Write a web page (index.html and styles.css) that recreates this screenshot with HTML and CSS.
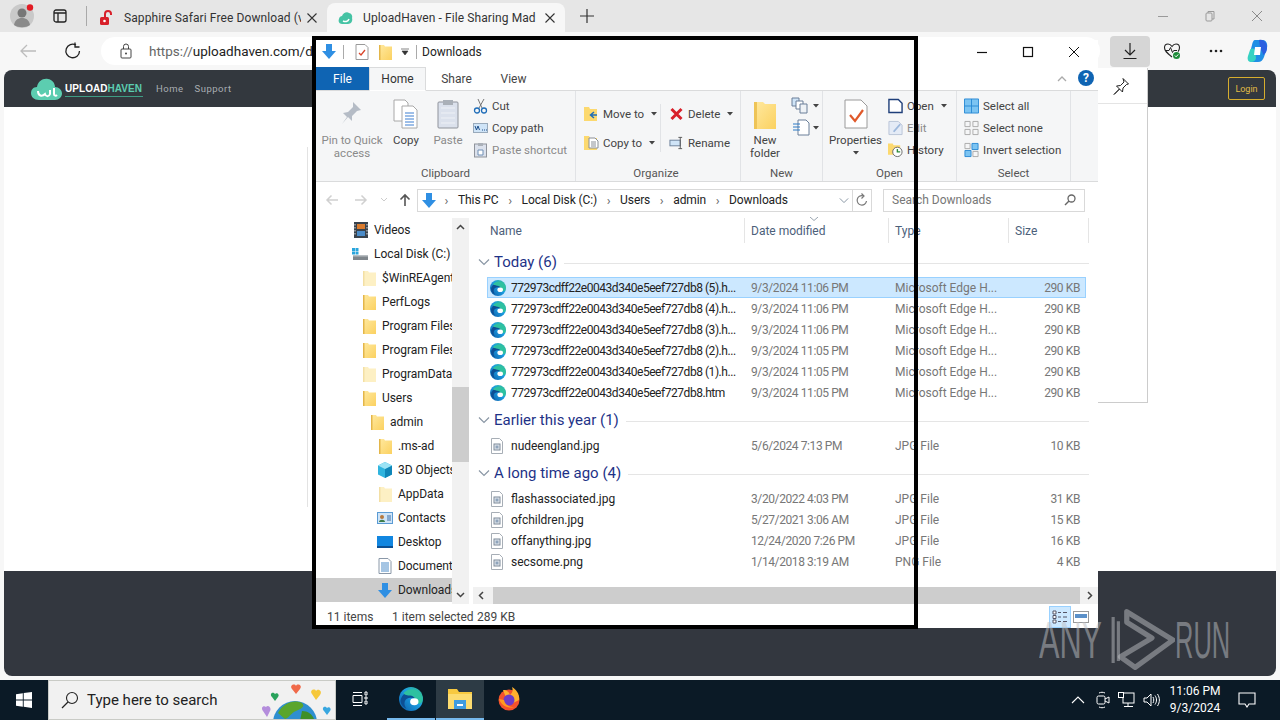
FILE: index.html
```html
<!DOCTYPE html>
<html lang="en">
<head>
<meta charset="utf-8">
<title>UploadHaven - File Sharing Made Simple</title>
<link rel="stylesheet" href="styles.css">
</head>
<body>
<svg class="sprite" width="0" height="0" aria-hidden="true">
  <defs>
    <linearGradient id="edgeG" x1="0" y1="1" x2="1" y2="0"><stop offset="0" stop-color="#0c59a4"/><stop offset=".55" stop-color="#1b9de2"/><stop offset="1" stop-color="#35c48d"/></linearGradient>
    <linearGradient id="fold" x1="0" y1="0" x2="1" y2="1"><stop offset="0" stop-color="#ffe9a0"/><stop offset="1" stop-color="#fbd160"/></linearGradient>
    <symbol id="edge" viewBox="0 0 16 16"><circle cx="8" cy="8" r="8" fill="url(#edgeG)"/><path d="M1 9C2 4 7 2 10.500 3.500 14 5 15 8 13.500 10 12 8 8 6 5 8 3.500 9 3 12 5 14.500 2.500 13.500 1 11 1 9Z" fill="#0d4f94"/><path d="M3 4C6 .5 12 .5 15 5c1 2 1 4 0 5.500-1.500 1-4 .8-4.500-.5 1-2-.5-4-3-4.300-2-.2-3.500 0-4.500-1.700Z" fill="#2ec1a0"/><ellipse cx="10.200" cy="9.800" rx="2.800" ry="2.300" fill="#fff"/></symbol>
    <symbol id="folder" viewBox="0 0 13 16"><path d="M0 1h5l1 1.500h7V16H0Z" fill="url(#fold)"/><path d="M0 1h1.500v15H0Z" fill="#e3b64a"/></symbol>
    <symbol id="pale" viewBox="0 0 13 16"><path d="M0 1h5l1 1.500h7V16H0Z" fill="#fdf0c4"/><path d="M0 1h1.500v15H0Z" fill="#f3dfa4"/></symbol>
    <symbol id="img" viewBox="0 0 14 16"><path d="M1.500.5h8l3 3v12h-11Z" fill="#fff" stroke="#a7aeb6"/><rect x="4" y="6" width="6" height="6" fill="#e3e8ee" stroke="#7d8a99"/><rect x="5.500" y="7.500" width="3" height="3" fill="#8fa4bb"/></symbol>
    <symbol id="chev" viewBox="0 0 12 8"><path d="M1 1.500l5 5 5-5" fill="none" stroke="#8a97a5" stroke-width="1.200"/></symbol>
    <symbol id="caret" viewBox="0 0 6 4"><path d="M0 0h6L3 3.500Z" fill="#444"/></symbol>
    <symbol id="xmark" viewBox="0 0 10 10"><path d="M.5.500l9 9M9.500.500l-9 9" stroke="#333" stroke-width="1.100"/></symbol>
  </defs>
</svg>

<div class="desktop">
  <div class="browser">
    <div class="tabstrip">
      <div class="profile"><svg width="26" height="26" viewBox="0 0 26 26"><circle cx="13" cy="13" r="12" fill="#c9c9c9"/><circle cx="13" cy="10" r="4.500" fill="#777"/><path d="M5 22c1-6 5-7 8-7s7 1 8 7c-4 3-12 3-16 0Z" fill="#8a8a8a"/><circle cx="21" cy="4.500" r="3.200" fill="#e21b24"/></svg></div>
      <div class="vtabs"><svg width="14" height="14" viewBox="0 0 14 14"><rect x="1" y="1" width="12" height="12" rx="2" fill="none" stroke="#222" stroke-width="1.300"/><path d="M1 4h12M5 4v9" stroke="#222" stroke-width="1.300"/></svg></div>
      <div class="tabdiv"></div>
      <div class="tab">
        <svg class="tabico" width="14" height="16" viewBox="0 0 14 16"><path d="M6 7V4a3 3 0 0 1 6 0v1" fill="none" stroke="#d8202a" stroke-width="2"/><rect x="1" y="7" width="9" height="8" rx="1.500" fill="#d8202a"/><circle cx="5.500" cy="11" r="1.300" fill="#fff"/></svg>
        <span class="tabtitle">Sapphire Safari Free Download (v</span>
        <svg class="tabx" width="10" height="10"><use href="#xmark"/></svg>
      </div>
      <div class="tab active">
        <svg class="tabico" width="16" height="16" viewBox="0 0 16 16"><path d="M4 14C1 14 0 11 1 9c0-2 2-3 3-3 1-3 5-5 7-3 2 0 4 3 3 5 1 3-1 6-4 6Z" fill="#45c3a4"/><path d="M5 11c2 1 5 1 6-2" fill="none" stroke="#fff" stroke-width="1.500"/></svg>
        <span class="tabtitle">UploadHaven - File Sharing Mad</span>
        <svg class="tabx" width="10" height="10"><use href="#xmark"/></svg>
      </div>
      <div class="newtab"><svg width="16" height="16" viewBox="0 0 16 16"><path d="M8 1v14M1 8h14" stroke="#333" stroke-width="1.200"/></svg></div>
      <div class="wincontrols">
        <svg width="12" height="12" viewBox="0 0 12 12"><path d="M1 6.500h10" stroke="#9a9a9a"/></svg>
        <svg width="12" height="12" viewBox="0 0 12 12"><rect x="2" y="3" width="6" height="8" rx="1" fill="none" stroke="#9a9a9a"/><path d="M4 3V1.500h6V9H8" fill="none" stroke="#9a9a9a"/></svg>
        <svg width="12" height="12" viewBox="0 0 12 12"><path d="M1 1l10 10M11 1L1 11" stroke="#8a8a8a"/></svg>
      </div>
    </div>
    <div class="toolbar">
      <svg class="back" width="18" height="14" viewBox="0 0 18 14"><path d="M17 7H2M8 1L2 7l6 6" fill="none" stroke="#bcbcbc" stroke-width="1.300"/></svg>
      <svg class="reload" width="18" height="18" viewBox="0 0 18 18"><path d="M15.500 9A6.800 6.800 0 1 1 12 3" fill="none" stroke="#222" stroke-width="1.300"/><path d="M11 .5V5h4.500" fill="none" stroke="#222" stroke-width="1.300"/></svg>
      <div class="urlpill">
        <svg width="12" height="16" viewBox="0 0 12 16"><rect x="1" y="6" width="10" height="9" rx="1" fill="none" stroke="#444"/><path d="M3.500 6V3.500a2.500 2.500 0 0 1 5 0V6" fill="none" stroke="#444"/><circle cx="6" cy="10.500" r="1" fill="#444"/></svg>
        <span class="url"><span class="urlmuted">https://</span>uploadhaven.com/d</span>
      </div>
      <div class="tools">
        <div class="dlbtn"><svg width="16" height="18" viewBox="0 0 16 18"><path d="M8 1v12M3 8l5 5 5-5M1.500 16.500h13" fill="none" stroke="#222" stroke-width="1.200"/></svg></div>
        <div class="tool"><svg width="18" height="18" viewBox="0 0 18 18"><path d="M9 15C4 11 1.500 9 1.500 5.800 1.500 3.500 3.200 2 5 2c1.800 0 3 1 4 2.500C10 3 11.200 2 13 2c1.800 0 3.500 1.500 3.500 3.800 0 1.500-.6 2.700-1.500 3.900" fill="none" stroke="#222" stroke-width="1.100"/><path d="M2.500 8.500H6l1.500-3 2 5 1.200-2H14" fill="none" stroke="#222"/><circle cx="13.500" cy="13.500" r="3.500" fill="#1e8c3a"/><path d="M11.800 13.500l1.300 1.300 2.200-2.400" fill="none" stroke="#fff"/></svg></div>
        <div class="tool"><svg width="14" height="4" viewBox="0 0 14 4"><circle cx="2" cy="2" r="1.300" fill="#222"/><circle cx="7" cy="2" r="1.300" fill="#222"/><circle cx="12" cy="2" r="1.300" fill="#222"/></svg></div>
        <div class="tool copilot"><svg width="24" height="24" viewBox="0 0 24 24"><path d="M9 1h8c3 0 5 4 4 8l-3 9c-1 3-3 5-6 5H6C3 23 2 20 3 17l3-11c.5-3 1.500-5 3-5Z" fill="#1f8fe5"/><path d="M4 11c1-2 4-2 5 0l1 8c0 2-2 4-5 4-3 0-4-3-3-6Z" fill="#36d2c2"/><path d="M13 1c3-1 6 1 7 3 2 5 1 10-3 12 0-4-3-5-3-8Z" fill="#2b5fe0"/><path d="M9 8h6l-1 8H8Z" fill="#fff"/></svg></div>
      </div>
    </div>
    <main class="page">
      <header class="sitehead">
        <svg class="sitelogo" width="31" height="24" viewBox="0 0 31 24"><path d="M8 23C3 23 0 20 0 16c0-3 2-6 6-6 1-6 6-9 11-8 4 .5 7 4 7 8 4 0 7 3 7 6.500S28 23 24 23Z" fill="#5ccdb0"/><path d="M7 14c0 5 4 6 7 3 1 3 4 3 5 0v-4M23 11v6c0 2 2 2 3 1" fill="none" stroke="#fff" stroke-width="2"/></svg>
        <span class="brand">UPLOAD<b>HAVEN</b></span>
        <nav class="sitenav"><span>Home</span><span>Support</span></nav>
        <span class="login">Login</span>
      </header>
      <div class="pagebody"></div>
      <footer class="sitefoot"></footer>
    </main>
  </div>

  <div class="flyout">
    <div class="flyhead"><svg width="18" height="18" viewBox="0 0 18 18"><path d="M11 1.500l5.500 5.500-2 .5-3.500 3.500-.5 4-3-3-5.500 5.500 5.500-5.500-3-3 4-.5L12 5Z" fill="none" stroke="#222" stroke-linejoin="round"/></svg></div>
  </div>

  <section class="explorer">
    <div class="titlebar">
      <svg width="16" height="17" viewBox="0 0 16 17"><path d="M5 1h6v7h4l-7 8-7-8h4Z" fill="#2f8fe3"/></svg>
      <i class="qsep"></i>
      <svg width="14" height="16" viewBox="0 0 14 16"><path d="M1 .5h9l3 3v12H1Z" fill="#fff" stroke="#9a9a9a"/><path d="M4 9l2 2 4-5" fill="none" stroke="#d9452a" stroke-width="1.300"/></svg>
      <svg class="qfold" width="13" height="16"><use href="#folder"/></svg>
      <svg class="qcaret" width="8" height="8" viewBox="0 0 8 8"><path d="M0 1h8M1 3h6L4 7Z" fill="#333" stroke="#333" stroke-width=".6"/></svg>
      <i class="qsep q2"></i>
      <span class="wintitle">Downloads</span>
      <div class="excontrols">
        <svg width="12" height="12" viewBox="0 0 12 12"><path d="M1 6.500h10" stroke="#111" stroke-width="1.200"/></svg>
        <svg width="12" height="12" viewBox="0 0 12 12"><rect x="1.500" y="1.500" width="9" height="9" fill="none" stroke="#111" stroke-width="1.200"/></svg>
        <svg width="12" height="12" viewBox="0 0 12 12"><path d="M1 1l10 10M11 1L1 11" stroke="#111"/></svg>
      </div>
    </div>
    <div class="tabsrow">
      <span class="rtab file">File</span><span class="rtab home">Home</span><span class="rtab share">Share</span><span class="rtab">View</span>
      <svg class="collapse" width="10" height="6" viewBox="0 0 10 6"><path d="M1 5l4-4 4 4" fill="none" stroke="#aaa" stroke-width="1.300"/></svg>
      <span class="help">?</span>
    </div>

    <div class="ribbon">
      <div class="rgroup g-clip">
        <div class="rbody">
          <div class="big w-pin off"><svg width="24" height="30" viewBox="0 0 24 30"><path d="M13 3l8 8-4 1-5 5v5l-4-4-6 7 5-7-4-4 5-1 5-5Z" fill="#b5bcc6"/></svg><span>Pin to Quick<br>access</span></div>
          <div class="big w-copy"><svg width="26" height="30" viewBox="0 0 26 30"><path d="M1 1h11l3 3v18H1Z" fill="#fff" stroke="#a8a8a8"/><path d="M9 7h11l4 4v18H9Z" fill="#fff" stroke="#a8a8a8"/><path d="M12 14h9M12 17h9M12 20h9M12 23h9M12 26h9" stroke="#3d7fd1"/></svg><span>Copy</span></div>
          <div class="big w-paste off"><svg width="22" height="30" viewBox="0 0 22 30"><rect x="1" y="3" width="20" height="26" rx="1" fill="#dbe1ec" stroke="#8f939b"/><rect x="6" y="1" width="10" height="5" fill="#aab0b8"/><path d="M4 9h14M4 14h14M4 19h14M4 24h14" stroke="#eef1f6"/></svg><span>Paste</span></div>
          <div class="smalls w-small">
            <div class="sm"><svg width="15" height="16" viewBox="0 0 15 16"><path d="M5 1l4 9M11 1L6 10" stroke="#777"/><circle cx="4" cy="12.500" r="2.500" fill="none" stroke="#1f6db8" stroke-width="1.300"/><circle cx="11" cy="12.500" r="2.500" fill="none" stroke="#1f6db8" stroke-width="1.300"/></svg><span>Cut</span></div>
            <div class="sm"><svg width="15" height="12" viewBox="0 0 15 12"><rect x=".5" y="1.500" width="14" height="9" fill="#cfe4f7" stroke="#9ab"/><path d="M2 4l1.500 4L5 4l1.500 4M9 8h1M11 8h1M13 8h1" stroke="#1c4f8c" fill="none"/></svg><span>Copy path</span></div>
            <div class="sm off"><svg width="15" height="16" viewBox="0 0 15 16"><rect x="1.500" y="2" width="12" height="13" fill="#dbe1ec" stroke="#8f939b"/><rect x="5" y="1" width="5" height="3" fill="#aab0b8"/><path d="M5 8h5v5H5Z" fill="#fff" stroke="#6f8fb5"/></svg><span>Paste shortcut</span></div>
          </div>
        </div>
        <div class="rlabel">Clipboard</div>
      </div>

      <div class="rgroup g-org">
        <div class="rbody">
          <div class="smalls tall c1">
            <div class="sm"><svg width="15" height="16" viewBox="0 0 15 16"><path d="M0 1h5l1 2h7v12H0Z" fill="#fcd96f"/><path d="M13 9H7m3-3L6.500 9 10 12" fill="none" stroke="#1f6db8" stroke-width="1.500"/></svg><span>Move to</span><svg class="car" width="6" height="4"><use href="#caret"/></svg></div>
            <div class="sm"><svg width="15" height="16" viewBox="0 0 15 16"><path d="M0 1h5l1 2h7v12H0Z" fill="#fcd96f"/><path d="M5 3h6l3 3v7H5Z" fill="#fff" stroke="#8a8f96"/><path d="M7 7h5M7 9h5M7 11h5" stroke="#8a8f96"/></svg><span>Copy to</span><svg class="car" width="6" height="4"><use href="#caret"/></svg></div>
          </div>
          <i class="minisep"></i>
          <div class="smalls tall c2">
            <div class="sm"><svg width="14" height="14" viewBox="0 0 14 14"><path d="M2 2l10 10M12 2L2 12" stroke="#d8202a" stroke-width="3"/></svg><span>Delete</span><svg class="car" width="6" height="4"><use href="#caret"/></svg></div>
            <div class="sm"><svg width="16" height="14" viewBox="0 0 16 14"><rect x="1" y="4" width="11" height="6" fill="#cfe4f7" stroke="#6a7f99"/><path d="M12 1v12M10 1h4M10 13h4" stroke="#555" fill="none"/></svg><span>Rename</span></div>
          </div>
        </div>
        <div class="rlabel org">Organize</div>
      </div>

      <div class="rgroup g-new">
        <div class="rbody">
          <div class="big w-nf"><svg width="22" height="30" viewBox="0 0 22 30"><path d="M0 3h9l2 2h11v25H0Z" fill="url(#fold)"/><path d="M0 3h3v27H0Z" fill="#eec457"/></svg><span>New<br>folder</span></div>
          <div class="newstack">
            <div class="nsrow"><svg width="20" height="17" viewBox="0 0 20 17"><path d="M1 1h7v8H1Z" fill="#cfe4f7" stroke="#6a7f99"/><path d="M5 4h7v8H5Z" fill="#fff" stroke="#6a7f99"/><path d="M9 7h7v9H9Z" fill="#eef2f6" stroke="#6a7f99"/></svg><svg width="6" height="4"><use href="#caret"/></svg></div>
            <div class="nsrow"><svg width="20" height="17" viewBox="0 0 20 17"><path d="M7 1h8l3 3v12H7Z" fill="#fff" stroke="#6a7f99"/><path d="M2 5h7M2 8h7M2 11h7" stroke="#2a78c4"/></svg><svg width="6" height="4"><use href="#caret"/></svg></div>
          </div>
        </div>
        <div class="rlabel">New</div>
      </div>

      <div class="rgroup g-open">
        <div class="rbody">
          <div class="big w-prop"><svg width="24" height="30" viewBox="0 0 24 30"><path d="M1 1h16l6 6v22H1Z" fill="#fff" stroke="#9a9a9a"/><path d="M6 16l5 6 8-11" fill="none" stroke="#e0592a" stroke-width="2.200"/></svg><span>Properties</span><svg class="bigcar" width="6" height="4"><use href="#caret"/></svg></div>
          <div class="smalls w-openlist">
            <div class="sm"><svg width="16" height="16" viewBox="0 0 16 16"><path d="M1 1h10l4 4v10H1Z" fill="#fff" stroke="#1f3f7a" stroke-width="1.500"/></svg><span>Open</span><svg class="car" width="6" height="4"><use href="#caret"/></svg></div>
            <div class="sm off"><svg width="16" height="16" viewBox="0 0 16 16"><path d="M1 1h10l4 4v10H1Z" fill="#e4ebf6" stroke="#b7c3d6"/><path d="M6 12l7-8" stroke="#9db8dc" stroke-width="2"/></svg><span>Edit</span></div>
            <div class="sm"><svg width="16" height="16" viewBox="0 0 16 16"><path d="M0 1h5l1 2h7v10H0Z" fill="#fcd96f"/><circle cx="10" cy="10" r="5" fill="#fff" stroke="#666"/><path d="M10 7v3h3" fill="none" stroke="#2e8b3c" stroke-width="1.500"/></svg><span>History</span></div>
          </div>
        </div>
        <div class="rlabel">Open</div>
      </div>

      <div class="rgroup g-sel">
        <div class="rbody">
          <div class="smalls w-sel">
            <div class="sm"><svg width="16" height="16" viewBox="0 0 16 16"><path d="M.5.5h15v15H.5ZM8 .5v15M.5 8h15" fill="#7cc4f2" stroke="#2a8ad4"/></svg><span>Select all</span></div>
            <div class="sm"><svg width="16" height="16" viewBox="0 0 16 16"><path d="M1 1h5.500v5.500H1ZM9.500 1H15v5.500H9.500ZM1 9.500h5.500V15H1ZM9.500 9.500H15V15H9.500Z" fill="none" stroke="#aaa"/></svg><span>Select none</span></div>
            <div class="sm"><svg width="16" height="16" viewBox="0 0 16 16"><path d="M8.500 1H15v6.500H8.500ZM1 8.500h6.500V15H1Z" fill="#7cc4f2" stroke="#2a8ad4"/><path d="M1 1h5.500v5.500H1ZM9.500 9.500H15V15H9.500Z" fill="none" stroke="#aaa"/></svg><span>Invert selection</span></div>
          </div>
        </div>
        <div class="rlabel">Select</div>
      </div>
    </div>

    <div class="addressrow">
      <svg class="navarr" width="14" height="12" viewBox="0 0 14 12"><path d="M13 6H2M6.500 1.500L2 6l4.500 4.500" fill="none" stroke="#d0d0d0" stroke-width="1.500"/></svg>
      <svg class="navarr" width="14" height="12" viewBox="0 0 14 12"><path d="M1 6h11M7.500 1.500L12 6l-4.500 4.500" fill="none" stroke="#d0d0d0" stroke-width="1.500"/></svg>
      <svg class="navcar" width="6" height="4" viewBox="0 0 6 4"><path d="M0 0l3 3 3-3" fill="none" stroke="#ccc"/></svg>
      <svg class="navup" width="12" height="14" viewBox="0 0 12 14"><path d="M6 13V2M1.500 6.500L6 2l4.500 4.500" fill="none" stroke="#555" stroke-width="1.600"/></svg>
      <div class="addrbox">
        <svg class="addrico" width="16" height="17" viewBox="0 0 16 17"><path d="M5 1h6v7h4l-7 8-7-8h4Z" fill="#2f8fe3"/></svg>
        <span class="crumbsep">›</span><span>This PC</span><span class="crumbsep">›</span><span>Local Disk (C:)</span><span class="crumbsep">›</span><span>Users</span><span class="crumbsep">›</span><span>admin</span><span class="crumbsep">›</span><span>Downloads</span>
        <svg class="addrchev" width="10" height="7"><use href="#chev"/></svg>
      </div>
      <div class="refresh"><svg width="12" height="14" viewBox="0 0 12 14"><path d="M10.500 8A4.700 4.700 0 1 1 7 2.800" fill="none" stroke="#777" stroke-width="1.200"/><path d="M5.500 .5L8 3 5.500 5.500" fill="none" stroke="#777" stroke-width="1.200"/></svg></div>
      <div class="searchbox"><span>Search Downloads</span><svg width="12" height="12" viewBox="0 0 12 12"><circle cx="7.500" cy="4.500" r="3.500" fill="none" stroke="#666" stroke-width="1.300"/><path d="M5 7l-4 4" stroke="#666" stroke-width="1.500"/></svg></div>
    </div>

    <div class="content">
      <aside class="navpane">
        <div class="tree">
          <div class="node l1"><svg width="14" height="16" viewBox="0 0 14 16"><rect width="14" height="16" fill="#39424c"/><rect x="3" y="2" width="8" height="5" fill="#d97b2e"/><rect x="3" y="9" width="8" height="5" fill="#4a8bc8"/><path d="M1 2v12M13 2v12" stroke="#ddd" stroke-dasharray="1.500 1.500"/></svg><span>Videos</span></div>
          <div class="node l1 drive"><svg width="16" height="14" viewBox="0 0 16 14"><rect x="0" y="1" width="3" height="3" fill="#2aa5dc"/><rect x="3.500" y="1" width="3" height="3" fill="#2aa5dc"/><rect x="0" y="4.500" width="3" height="3" fill="#2aa5dc"/><rect x="3.500" y="4.500" width="3" height="3" fill="#2aa5dc"/><rect x="1" y="8" width="15" height="5" fill="#7f868c"/><rect x="1" y="8" width="15" height="1.500" fill="#b9bec2"/></svg><span>Local Disk (C:)</span></div>
          <div class="node l2"><svg width="13" height="16"><use href="#pale"/></svg><span>$WinREAgent</span></div>
          <div class="node l2"><svg width="13" height="16"><use href="#folder"/></svg><span>PerfLogs</span></div>
          <div class="node l2"><svg width="13" height="16"><use href="#folder"/></svg><span>Program Files</span></div>
          <div class="node l2"><svg width="13" height="16"><use href="#folder"/></svg><span>Program Files (x86)</span></div>
          <div class="node l2"><svg width="13" height="16"><use href="#pale"/></svg><span>ProgramData</span></div>
          <div class="node l2"><svg width="13" height="16"><use href="#folder"/></svg><span>Users</span></div>
          <div class="node l3"><svg width="13" height="16"><use href="#folder"/></svg><span>admin</span></div>
          <div class="node l4"><svg width="13" height="16"><use href="#folder"/></svg><span>.ms-ad</span></div>
          <div class="node l4 wide"><svg width="16" height="16" viewBox="0 0 16 16"><path d="M8 0l7 3.500v9L8 16l-7-3.500v-9Z" fill="#2fb4de"/><path d="M8 7l7-3.500v9L8 16Z" fill="#0f86b8"/><path d="M8 7L1 3.500 8 0l7 3.500Z" fill="#9be3f5"/></svg><span>3D Objects</span></div>
          <div class="node l4"><svg width="13" height="16"><use href="#pale"/></svg><span>AppData</span></div>
          <div class="node l4 wide"><svg width="16" height="12" viewBox="0 0 16 12"><rect x=".5" y=".5" width="15" height="11" fill="#cfe4f7" stroke="#5a9bd4"/><circle cx="5" cy="5" r="2" fill="#b5793f"/><path d="M2 10c0-3 6-3 6 0Z" fill="#3c7d4a"/><path d="M10 4h4M10 6h4M10 8h4" stroke="#3c6fa8"/></svg><span>Contacts</span></div>
          <div class="node l4 wide"><svg width="16" height="12" viewBox="0 0 16 12"><rect width="16" height="12" fill="#1186e0"/><path d="M0 11h16" stroke="#0b4f92" stroke-width="2"/></svg><span>Desktop</span></div>
          <div class="node l4 wide"><svg width="14" height="16" viewBox="0 0 14 16"><path d="M1 .5h9l3 3v12H1Z" fill="#fff" stroke="#8a98a8"/><path d="M3 5h8M3 7h8M3 9h8M3 11h8M3 13h8" stroke="#4a8bc8"/></svg><span>Documents</span></div>
          <div class="node l4 wide sel"><svg width="16" height="17" viewBox="0 0 16 17"><path d="M5 1h6v7h4l-7 8-7-8h4Z" fill="#2f8fe3"/></svg><span>Downloads</span></div>
        </div>
        <div class="vscroll">
          <svg width="9" height="6" viewBox="0 0 9 6"><path d="M1 5l3.500-3.500L8 5" fill="none" stroke="#444" stroke-width="1.500"/></svg>
          <div class="vtrack"><div class="vthumb"></div></div>
          <svg width="9" height="6" viewBox="0 0 9 6"><path d="M1 1l3.500 3.500L8 1" fill="none" stroke="#444" stroke-width="1.500"/></svg>
        </div>
      </aside>

      <div class="files">
        <div class="colheads">
          <span class="ch c-name">Name</span><span class="ch c-date">Date modified<svg class="sortmark" width="8" height="4" viewBox="0 0 8 4"><path d="M0 0l4 3.500L8 0" fill="none" stroke="#9aa5b0"/></svg></span><span class="ch c-type">Type</span><span class="ch c-size">Size</span>
        </div>

        <div class="ghead"><svg width="12" height="8"><use href="#chev"/></svg><span>Today (6)</span><i></i></div>
        <div class="row sel"><svg width="16" height="16"><use href="#edge"/></svg><span class="n h">772973cdff22e0043d340e5eef727db8 (5).h...</span><span class="d">9/3/2024 11:06 PM</span><span class="t">Microsoft Edge H...</span><span class="s">290 KB</span></div>
        <div class="row"><svg width="16" height="16"><use href="#edge"/></svg><span class="n h">772973cdff22e0043d340e5eef727db8 (4).h...</span><span class="d">9/3/2024 11:06 PM</span><span class="t">Microsoft Edge H...</span><span class="s">290 KB</span></div>
        <div class="row"><svg width="16" height="16"><use href="#edge"/></svg><span class="n h">772973cdff22e0043d340e5eef727db8 (3).h...</span><span class="d">9/3/2024 11:06 PM</span><span class="t">Microsoft Edge H...</span><span class="s">290 KB</span></div>
        <div class="row"><svg width="16" height="16"><use href="#edge"/></svg><span class="n h">772973cdff22e0043d340e5eef727db8 (2).h...</span><span class="d">9/3/2024 11:05 PM</span><span class="t">Microsoft Edge H...</span><span class="s">290 KB</span></div>
        <div class="row"><svg width="16" height="16"><use href="#edge"/></svg><span class="n h">772973cdff22e0043d340e5eef727db8 (1).h...</span><span class="d">9/3/2024 11:05 PM</span><span class="t">Microsoft Edge H...</span><span class="s">290 KB</span></div>
        <div class="row"><svg width="16" height="16"><use href="#edge"/></svg><span class="n h">772973cdff22e0043d340e5eef727db8.htm</span><span class="d">9/3/2024 11:05 PM</span><span class="t">Microsoft Edge H...</span><span class="s">290 KB</span></div>

        <div class="ghead"><svg width="12" height="8"><use href="#chev"/></svg><span>Earlier this year (1)</span><i></i></div>
        <div class="row"><svg width="14" height="16"><use href="#img"/></svg><span class="n">nudeengland.jpg</span><span class="d">5/6/2024 7:13 PM</span><span class="t">JPG File</span><span class="s">10 KB</span></div>

        <div class="ghead"><svg width="12" height="8"><use href="#chev"/></svg><span>A long time ago (4)</span><i></i></div>
        <div class="row"><svg width="14" height="16"><use href="#img"/></svg><span class="n">flashassociated.jpg</span><span class="d">3/20/2022 4:03 PM</span><span class="t">JPG File</span><span class="s">31 KB</span></div>
        <div class="row"><svg width="14" height="16"><use href="#img"/></svg><span class="n">ofchildren.jpg</span><span class="d">5/27/2021 3:06 AM</span><span class="t">JPG File</span><span class="s">15 KB</span></div>
        <div class="row"><svg width="14" height="16"><use href="#img"/></svg><span class="n">offanything.jpg</span><span class="d">12/24/2020 7:26 PM</span><span class="t">JPG File</span><span class="s">16 KB</span></div>
        <div class="row"><svg width="14" height="16"><use href="#img"/></svg><span class="n">secsome.png</span><span class="d">1/14/2018 3:19 AM</span><span class="t">PNG File</span><span class="s">4 KB</span></div>

        <div class="hscroll">
          <svg width="6" height="9" viewBox="0 0 6 9"><path d="M5 1L1.500 4.500 5 8" fill="none" stroke="#444" stroke-width="1.500"/></svg>
          <div class="hthumb"></div>
          <svg width="6" height="9" viewBox="0 0 6 9"><path d="M1 1l3.500 3.500L1 8" fill="none" stroke="#444" stroke-width="1.500"/></svg>
        </div>
      </div>
    </div>

    <div class="statusbar">
      <span class="st1">11 items</span><span class="st2">1 item selected</span><span class="st3">289 KB</span>
      <div class="viewbtns">
        <span class="vb on"><svg width="16" height="14" viewBox="0 0 16 14"><path d="M1 1h3v3H1ZM1 5.500h3v3H1ZM1 10h3v3H1Z" fill="#fff" stroke="#556"/><path d="M6 2.500h3M11 2.500h4M6 7h3M11 7h4M6 11.500h3M11 11.500h4" stroke="#556"/></svg></span>
        <span class="vb two"><svg width="16" height="12" viewBox="0 0 16 12"><rect x=".5" y=".5" width="15" height="11" fill="#fff" stroke="#999"/><path d="M2 3h12v4H2Z" fill="#5b90c8"/></svg></span>
      </div>
    </div>
  </section>

  <div class="frame"></div>

  <div class="watermark">
    <span class="wm-any">ANY</span>
    <svg width="65" height="64" viewBox="3 0 62 60"><path d="M11 12V50M6 8v44" fill="none" stroke="currentColor" stroke-width="3"/><path d="M19 3l44 27-36 26-14-10 30-18-24-15Z" fill="none" stroke="currentColor" stroke-width="5" stroke-linejoin="round"/></svg>
    <span class="wm-run">RUN</span>
  </div>

  <footer class="taskbar">
    <div class="start"><svg width="16" height="16" viewBox="0 0 16 16"><path d="M0 2.200L6.800 1.200v6.300H0ZM7.700 1.100L16 0v7.500H7.700ZM0 8.500h6.800v6.300L0 13.800ZM7.700 8.500H16V16l-8.300-1.200Z" fill="#fff"/></svg></div>
    <div class="search">
      <svg width="18" height="18" viewBox="0 0 18 18"><circle cx="11" cy="7" r="5.500" fill="none" stroke="#222" stroke-width="1.100"/><path d="M7 11l-6 6" stroke="#222" stroke-width="1.200"/></svg>
      <span>Type here to search</span>
      <svg class="earth" width="72" height="40" viewBox="0 0 72 40"><circle cx="33" cy="42" r="22" fill="#2e8fd0"/><path d="M16 32c5-10 16-14 24-10 4 4-2 6-6 8-5 2-6 6-11 8Z" fill="#5aa52c"/><path d="M40 30c6 0 10 3 12 8l-14 2Z" fill="#3f8f27"/><path d="M30 8c-3-4 3-6 4-3 1-3 7-1 4 3l-4 5Z" fill="#f06a4a"/><path d="M10 16c-3-3 1-6 3-3 2-2 5 1 3 3l-3 4Z" fill="#29a35c"/><path d="M50 13c-3-4 3-6 4-3 2-3 7 0 4 4l-4 5Z" fill="#f6c83a"/><path d="M62 30c-3-3 1-6 3-3 2-2 5 1 3 3l-3 4Z" fill="#38a7e0"/><path d="M1 30c-3-4 1-6 3-4 2-3 6 1 4 4l-3 6Z" fill="#b48ddc"/></svg>
    </div>
    <div class="tbtn taskview"><svg width="16" height="16" viewBox="0 0 16 16"><path d="M1 1.500h9M1 14.500h9M1 4.500h9v7H1ZM13 1h2v3h-2ZM13 6h2v2h-2ZM13 10h2v3h-2Z" fill="none" stroke="#fff"/></svg></div>
    <div class="tbtn running"><svg width="24" height="24"><use href="#edge"/></svg></div>
    <div class="tbtn running current"><svg width="24" height="22" viewBox="0 0 24 22"><path d="M0 1h9l2 3h13v17H0Z" fill="#f7c940"/><path d="M0 6h24v15H0Z" fill="#fcdc70"/><path d="M6 12h12v9H6Z" fill="#3f9ce0"/><path d="M9 16h6v2H9Z" fill="#fff"/></svg></div>
    <div class="tbtn fox"><svg width="24" height="24" viewBox="0 0 24 24"><circle cx="12" cy="13" r="10.500" fill="#f4512c"/><path d="M6 3c4 0 6 2 7 5 3-3 3-5 2-8 5 3 8 8 7 13L12 18Z" fill="#ffb02e"/><circle cx="12" cy="13" r="5.500" fill="#6e3cc7"/><path d="M2 12c2 6 8 10 15 8-5 0-9-2-10-7Z" fill="#ff9a1f"/></svg></div>
    <div class="tray">
      <svg class="trchev" width="14" height="8" viewBox="0 0 14 8"><path d="M1 7l6-6 6 6" fill="none" stroke="#fff" stroke-width="1.100"/></svg>
      <svg width="14" height="18" viewBox="0 0 14 18"><rect x="1" y="5" width="8" height="8" rx="1.500" fill="none" stroke="#fff"/><path d="M9 8l4-2v6l-4-2M3 2c2-1 4-1 6 0M3 16c2 1 4 1 6 0" fill="none" stroke="#fff"/></svg>
      <svg width="17" height="16" viewBox="0 0 17 16"><rect x="5" y="1" width="11" height="10" fill="none" stroke="#fff"/><rect x=".5" y=".5" width="5" height="5" fill="#0b1a26" stroke="#fff"/><path d="M10 11v3M6 14.500h9" stroke="#fff"/></svg>
      <svg width="17" height="14" viewBox="0 0 17 14"><path d="M1 5h3l4-4v12l-4-4H1Z" fill="none" stroke="#fff"/><path d="M10 4c1 2 1 4 0 6M12 2.500c2 3 2 6 0 9M14.500 1c2.500 4 2.500 8 0 12" fill="none" stroke="#fff"/></svg>
      <div class="clock"><span>11:06 PM</span><span>9/3/2024</span></div>
      <svg class="notif" width="18" height="16" viewBox="0 0 18 16"><path d="M1 1h16v11h-6l-2 3-2-3H1Z" fill="none" stroke="#fff" stroke-width="1.100"/></svg>
    </div>
  </footer>
</div>
</body>
</html>
```
FILE: styles.css
```css
* { box-sizing: border-box; }
html, body { margin: 0; padding: 0; width: 1280px; height: 720px; overflow: hidden; }
body { font-family: Roboto, "Open Sans", sans-serif; font-size: 12px; color: #222; }
svg { display: block; flex: none; }
.sprite { position: absolute; }
.desktop { position: relative; width: 1280px; height: 720px; display: flex; flex-direction: column; background: #0b1a26; }

/* browser */
.browser { flex: 1; display: flex; flex-direction: column; background: #f7f7f7; min-height: 0; }
.tabstrip { height: 32px; background: #e6e6e6; display: flex; align-items: center; padding-left: 9px; }
.profile { width: 26px; margin-right: 18px; }
.vtabs { width: 14px; margin-right: 19px; }
.tabdiv { width: 1px; height: 20px; background: #a9a9a9; margin-right: 5px; }
.tab { width: 235px; height: 29px; margin-top: 3px; display: flex; align-items: center; padding-left: 7px; font-size: 12px; color: #333; }
.tab .tabico { margin-right: 11px; }
.tab.active { background: #f7f7f7; border-radius: 8px 8px 0 0; width: 238px; padding-left: 11px; }
.tab.active .tabico { margin-right: 9px; }
.tabtitle { flex: 1; overflow: hidden; white-space: nowrap; letter-spacing: .1px; }
.tabx { margin: 0 10px 0 6px; }
.newtab { margin-left: 14px; }
.wincontrols { margin-left: auto; display: flex; gap: 35px; padding-right: 17px; }
.toolbar { height: 37px; display: flex; align-items: center; padding: 1px 0 0 19px; }
.back { margin-right: 27px; }
.reload { margin-right: 19px; }
.urlpill { width: 1000px; height: 28px; background: #fff; border-radius: 14px; display: flex; align-items: center; padding-left: 19px; gap: 17px; font-size: 13.5px; }
.urlmuted { color: #666; }
.tools { display: flex; align-items: center; margin-left: 10px; }
.dlbtn { width: 40px; height: 31px; background: #d6d6d6; border-radius: 4px; display: flex; align-items: center; justify-content: center; }
.tool { width: 44px; display: flex; justify-content: center; }
.copilot { margin-left: -2px; }

/* page */
.page { flex: 1; margin: 1px 4px 4px; display: flex; flex-direction: column; border-radius: 8px; overflow: hidden; background: #fff; }
.sitehead { height: 37px; flex: none; background: #33383e; display: flex; align-items: center; padding-left: 27px; padding-right: 11px; }
.brand { margin: 2px 0 0 3px; font: 700 10px "Liberation Sans", sans-serif; color: #fff; border-bottom: 1px solid #3f9c84; padding-bottom: 2px; width: 78px; letter-spacing: .05px; white-space: nowrap; }
.brand b { color: #5ccdb0; }
.sitenav { display: flex; gap: 11px; margin-left: 13px; color: #a9aeb3; font-size: 9.5px; letter-spacing: .5px; }
.login { margin-left: auto; width: 37px; height: 23px; border: 1px solid #d6ad2e; border-radius: 2px; color: #e3bd45; font-size: 9px; display: flex; align-items: center; justify-content: center; }
.pagebody { flex: 1; background: linear-gradient(#e3e3e3, #e3e3e3) 303px 40px / 1px 360px no-repeat #fff; }
.sitefoot { height: 105px; flex: none; background: #33373f; }

.flyout { position: absolute; left: 320px; top: 68px; width: 828px; height: 335px; background: #fff; border-right: 1px solid #ccc; border-bottom: 1px solid #ccc; }
.flyhead { height: 36px; border-bottom: 1px solid #e4e4e4; display: flex; justify-content: flex-end; align-items: center; padding-right: 17px; }

/* explorer */
.explorer { position: absolute; left: 316px; top: 40px; width: 782px; height: 588px; background: #fff; display: flex; flex-direction: column; color: #222; }
.titlebar { height: 27px; flex: none; display: flex; align-items: center; padding: 0 0 4px 5px; }
.qsep { width: 1px; height: 14px; background: #aaa; margin: 0 11px 0 6px; }
.qfold { margin-left: 10px; }
.qcaret { margin-left: 9px; }
.q2 { margin: 0 5px 0 7px; }
.wintitle { font-size: 12px; }
.excontrols { margin-left: auto; display: flex; gap: 34px; padding-right: 18px; }
.tabsrow { height: 24px; flex: none; display: flex; align-items: stretch; position: relative; border-bottom: 1px solid #dadbdc; }
.rtab { width: 57px; display: flex; align-items: center; justify-content: center; color: #444; font-size: 12px; }
.rtab.share { margin-left: 2px; }
.rtab.file { width: 53px; background: #0f64b3; color: #fff; box-shadow: -3px 0 0 -1px #d97b2e; }
.rtab.home { border: 1px solid #dadbdc; border-bottom: 1px solid #fff; height: 24px; background: #f5f6f7; color: #333; }
.collapse { margin: 9px 0 0 auto; }
.help { width: 16px; height: 16px; border-radius: 50%; background: #0f64b3; color: #fff; font-weight: 700; font-size: 12px; display: flex; align-items: center; justify-content: center; margin: 3px 4px 0 11px; }

.ribbon { height: 91px; flex: none; background: #f5f6f7; display: flex; border-bottom: 1px solid #dadbdc; color: #444; font-size: 11.5px; }
.rgroup { display: flex; flex-direction: column; border-right: 1px solid #e1e3e6; }
.g-clip { width: 260px; }
.g-org { width: 165px; }
.g-new { width: 82px; }
.g-open { width: 134px; }
.g-sel { width: 114px; }
.rbody { flex: 1; display: flex; padding-top: 3px; min-height: 0; }
.rlabel { height: 18px; text-align: center; color: #555; line-height: 20px; }
.rlabel.org { padding-right: 4px; }
.big { display: flex; flex-direction: column; align-items: center; text-align: center; line-height: 13px; padding-top: 5px; }
.big svg:first-child { height: 30px; margin-bottom: 5px; }
.off { color: #8a8a8a; }
.w-pin { width: 72px; }
.w-copy { width: 36px; }
.w-paste { width: 48px; }
.smalls { display: flex; flex-direction: column; justify-content: flex-start; padding-top: 1px; }
.sm { height: 22px; display: flex; align-items: center; gap: 4px; white-space: nowrap; }
.sm > svg:first-child { width: 15px; }
.car { margin-left: 3px; }
.tall { padding-top: 9px; gap: 7px; }
.c1 { margin-left: 8px; width: 76px; }
.minisep { width: 1px; height: 48px; background: #e1e3e6; margin: 10px 0 0 0; }
.c2 { margin-left: 8px; }
.w-small { margin-left: 1px; }
.w-nf { width: 48px; }
.newstack { display: flex; flex-direction: column; gap: 5px; padding: 3px 0 0 2px; }
.nsrow { display: flex; align-items: center; gap: 2px; height: 17px; }
.w-prop { width: 65px; }
.bigcar { margin-top: 4px; }
.w-sel { margin-left: 7px; }

.addressrow { height: 36px; flex: none; display: flex; align-items: center; padding: 0 0 0 9px; color: #222; }
.navarr { margin-right: 15px; }
.navcar { margin: 0 12px 0 -2px; }
.navup { margin-right: 6px; }
.addrbox { width: 436px; height: 23px; border: 1px solid #d9d9d9; display: flex; align-items: center; padding-left: 3px; letter-spacing: -.1px; }
.addrico { margin-right: -2px; }
.crumbsep { color: #666; width: 23px; text-align: center; font-size: 13px; }
.addrchev { margin-left: auto; margin-right: 3px; }
.refresh { width: 19px; height: 23px; display: flex; align-items: center; justify-content: center; border: 1px solid #d9d9d9; border-left: 0; }
.searchbox { width: 202px; height: 23px; margin-left: 11px; border: 1px solid #d9d9d9; display: flex; align-items: center; justify-content: space-between; padding: 0 8px; color: #777; }

.content { flex: 1; display: flex; min-height: 0; }
.navpane { width: 153px; flex: none; display: flex; }
.tree { width: 136px; overflow: hidden; letter-spacing: -.05px; }
.node { height: 24px; display: flex; align-items: center; white-space: nowrap; overflow: hidden; }
.node span { flex: none; }
.node svg { margin-right: 6px; }
.l1 { padding-left: 38px; }
.drive { padding-left: 36px; }
.l2 { padding-left: 47px; }
.l3 { padding-left: 55px; }
.l4 { padding-left: 63px; }
.l4.wide { padding-left: 61px; }
.l4.wide svg { margin-right: 5px; width: 16px; }
.node.sel { background: #ccc; }
.vscroll { width: 17px; display: flex; flex-direction: column; align-items: center; background: #f1f1f1; padding: 6px 0; }
.vtrack { flex: 1; width: 17px; padding-top: 157px; }
.vthumb { height: 75px; background: #cdcdcd; }

.files { flex: 1; min-width: 0; display: flex; flex-direction: column; padding-left: 1px; }
.colheads { height: 25px; flex: none; display: grid; grid-template-columns: 275px 144px 120px 80px; margin-right: 9px; margin-bottom: 2px; color: #4c607a; }
.ch { display: flex; align-items: center; padding: 0 6px; border-right: 1px solid #e5e5e5; position: relative; }
.c-name { padding-left: 20px; }
.sortmark { position: absolute; left: 65px; top: -1px; }
.ghead { height: 32px; flex: none; display: flex; align-items: center; padding: 2px 0 0 8px; color: #1e3287; font-size: 15px; margin-right: 9px; }
.ghead svg { margin-right: 4px; }
.ghead i { flex: 1; height: 1px; background: #e5e5e5; margin-left: 7px; margin-top: 2px; }
.row { height: 21px; flex: none; display: grid; grid-template-columns: 21px 240px 144px 118px 71px; align-items: center; margin: 0 12px 0 17px; padding-left: 2px; border: 1px solid transparent; color: #777; white-space: nowrap; }
.row .n { color: #222; overflow: hidden; }
.row .n.h { letter-spacing: -.46px; }
.row .d { letter-spacing: -.4px; }
.row .s { text-align: right; padding-right: 4px; letter-spacing: -.4px; }
.row.sel { background: #cce8ff; border-color: #99d1ff; }
.hscroll { margin-top: auto; height: 17px; flex: none; display: flex; align-items: center; background: #f1f1f1; justify-content: space-between; padding: 0 5px; margin-left: 3px; }
.hthumb { flex: 1; height: 17px; background: #cdcdcd; margin: 0 7px 0 9px; }

.statusbar { height: 24px; flex: none; display: flex; align-items: center; color: #444; padding: 1px 0 0 11px; }
.st1 { width: 65px; }
.st2 { width: 85px; }
.viewbtns { margin-left: auto; display: flex; gap: 1px; padding-right: 8px; }
.vb { width: 22px; height: 22px; display: flex; align-items: center; justify-content: center; }
.vb.two { width: 18px; }
.vb.on { background: #cce8ff; border: 1px solid #99d1ff; }

.frame { position: absolute; left: 312px; top: 36px; width: 606px; height: 593px; border: 4px solid #000; pointer-events: none; }

.watermark { position: absolute; left: 1039px; top: 608px; display: flex; align-items: center; color: rgba(190, 192, 196, .5); font: 52px "Liberation Sans", sans-serif; line-height: 64px; }
.watermark span { display: block; white-space: nowrap; transform-origin: left center; }
.wm-any { width: 71px; transform: scaleX(.59); }
.wm-run { width: 56px; margin-left: 0; transform: scaleX(.49); }

/* taskbar */
.taskbar { height: 40px; flex: none; background: #0b1a26; display: flex; align-items: center; color: #fff; }
.start { width: 48px; display: flex; justify-content: center; }
.search { width: 288px; height: 40px; background: #f1f1f1; border: 1px solid #c9cbc6; display: flex; align-items: center; padding-left: 12px; gap: 8px; color: #222; font-size: 15px; position: relative; overflow: hidden; }
.earth { position: absolute; right: 1px; top: 0; }
.tbtn { width: 48px; height: 40px; display: flex; align-items: center; justify-content: center; border-bottom: 2px solid transparent; }
.taskview { margin-right: 3px; }
.running { border-bottom-color: #76b9ed; }
.current { background: #2d3b45; margin-left: 1px; }
.fox { margin-left: 1px; }
.tray { margin-left: auto; display: flex; align-items: center; gap: 8px; padding-right: 24px; }
.trchev { margin-right: 3px; }
.clock { display: flex; flex-direction: column; align-items: center; font-size: 12px; line-height: 17px; width: 64px; margin-left: -5px; }
.notif { margin-left: 3px; }
```
